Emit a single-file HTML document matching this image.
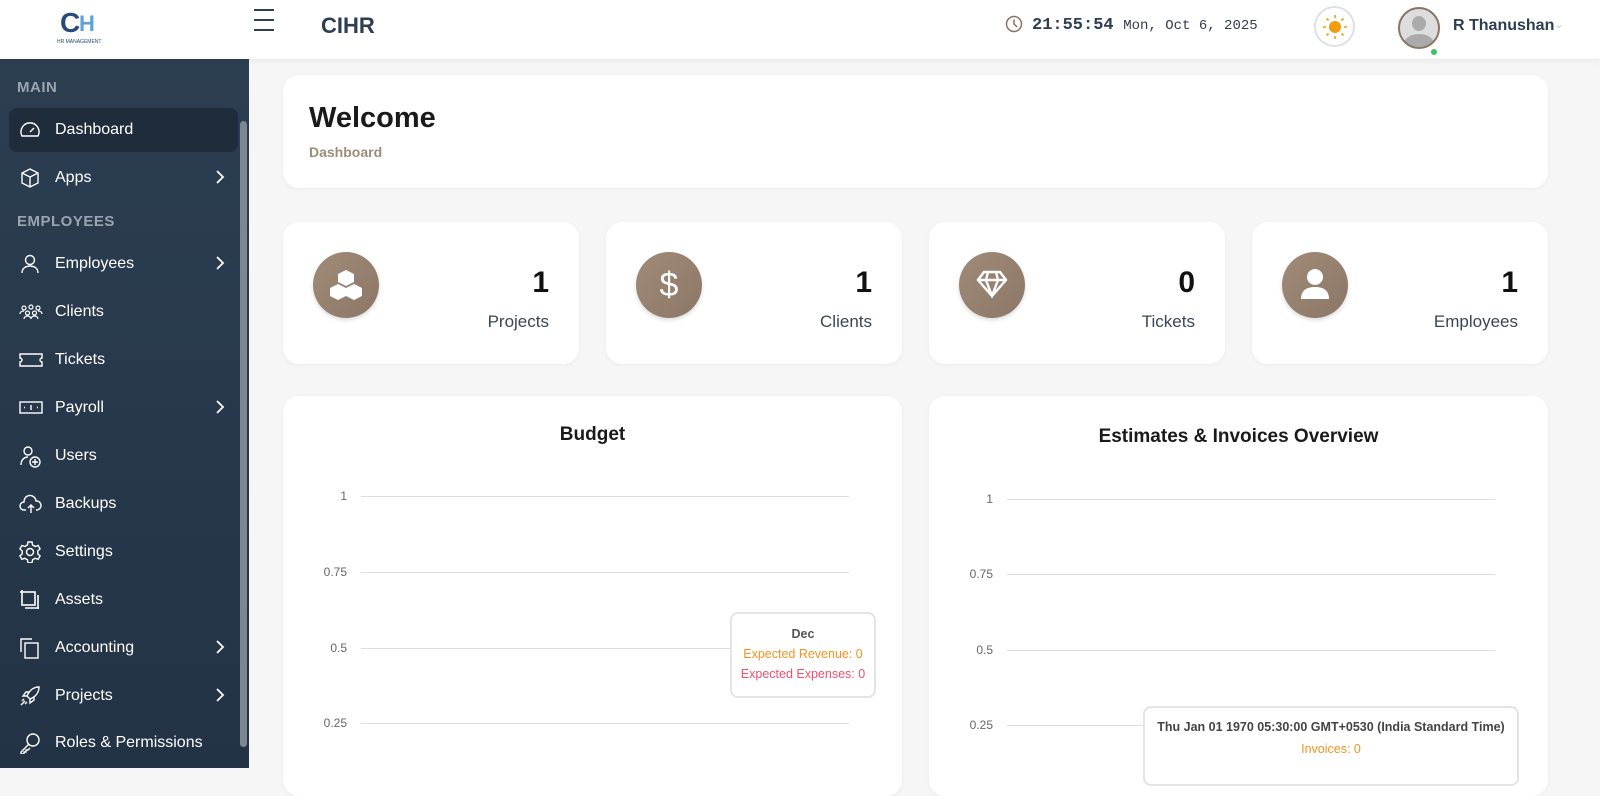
<!DOCTYPE html>
<html><head><meta charset="utf-8"><style>
*{box-sizing:border-box;margin:0;padding:0}
body{width:1600px;height:768px;overflow:hidden;background:#f6f6f6;font-family:"Liberation Sans",sans-serif;position:relative}
.hdr{position:absolute;left:0;top:0;width:1600px;height:59px;background:#fff;box-shadow:0 2px 6px rgba(0,0,0,.06);z-index:3}
.side{position:absolute;left:0;top:59px;width:249px;height:709px;background:linear-gradient(#2c3e51,#233346);color:#fff}
.scroll{position:absolute;left:240px;top:62px;width:7px;height:626px;background:#7d8792;border-radius:4px}
.lbl{position:absolute;left:17px;font-size:15px;font-weight:bold;color:#9aa5ae;letter-spacing:.5px}
.it{position:absolute;left:9px;width:229px;height:44px;font-size:16px;color:#fff;display:flex;align-items:center;padding-left:46px}
.it svg{position:absolute;left:10px;top:11px}
.it .ch{position:absolute;left:205px;top:14px}
.card{position:absolute;background:#fff;border-radius:16px;box-shadow:0 1px 4px rgba(0,0,0,.05)}
.stat .ic{position:absolute;left:30px;top:30px;width:66px;height:66px;border-radius:50%;background:linear-gradient(135deg,#a08b78,#8c7767);box-shadow:0 2px 4px rgba(0,0,0,.15)}
.stat .n{position:absolute;right:30px;top:44px;font-size:30px;font-weight:bold;color:#111}
.stat .t{position:absolute;right:30px;top:90px;font-size:17px;color:#3a4656}
.gl{position:absolute;height:1px;background:#ddd}
.ax{position:absolute;font-size:12px;color:#666;text-align:right;width:40px}
.tip{position:absolute;background:#fff;border:2px solid #e4e4e4;border-radius:8px;font-size:12.5px;text-align:center}
</style></head><body>
<div class="hdr">
 <div style="position:absolute;left:60px;top:10px;width:40px;height:26px">
  <div style="position:absolute;left:0;top:0;font-size:28px;font-weight:bold;color:#2c4a78;line-height:26px">C</div>
  <div style="position:absolute;left:19px;top:2px;font-size:22px;font-weight:bold;color:#5ba2d8;line-height:24px">H</div>
 </div>
 <div style="position:absolute;left:57px;top:39px;font-size:5px;color:#2c4a78">HR MANAGEMENT</div>
 <div style="position:absolute;left:254px;top:9px;width:20px;height:2px;background:#2c3e50"></div>
 <div style="position:absolute;left:254px;top:19px;width:20px;height:2px;background:#2c3e50"></div>
 <div style="position:absolute;left:254px;top:29px;width:20px;height:2px;background:#2c3e50"></div>
 <div style="position:absolute;left:321px;top:13px;font-size:22px;font-weight:bold;color:#2c3e50">CIHR</div>
 <svg style="position:absolute;left:1005px;top:15px" width="18" height="18" viewBox="0 0 18 18"><circle cx="9" cy="9" r="7.5" fill="none" stroke="#8a7565" stroke-width="1.5"/><path d="M9 4.5V9l3 3" fill="none" stroke="#8a7565" stroke-width="1.5"/></svg>
 <div style="position:absolute;left:1032px;top:16px;font-family:'Liberation Mono',monospace;color:#2c3e50"><b style="font-size:17px">21:55:54</b> <span style="font-size:14px">Mon, Oct 6, 2025</span></div>
 <div style="position:absolute;left:1314px;top:6px;width:41px;height:41px;border-radius:50%;border:2px solid #dde0e5;background:#fff"></div>
 <svg style="position:absolute;left:1322px;top:14px" width="26" height="26" viewBox="0 0 26 26"><circle cx="13" cy="13" r="6" fill="#f39c12"/><g stroke="#f39c12" stroke-width="1.6"><path d="M13 1v3M13 22v3M1 13h3M22 13h3M4.5 4.5l2 2M19.5 19.5l2 2M4.5 21.5l2-2M19.5 6.5l2-2"/></g></svg>
 <div style="position:absolute;left:1398px;top:7px;width:42px;height:42px;border-radius:50%;border:2px solid #8a7565;background:#ddd;overflow:hidden"><div style="position:absolute;left:12px;top:7px;width:14px;height:15px;border-radius:50%;background:#aaa"></div><div style="position:absolute;left:4px;top:25px;width:30px;height:20px;border-radius:50%;background:#aaa"></div></div>
 <div style="position:absolute;left:1430px;top:48px;width:8px;height:8px;border-radius:50%;background:#3cc25a;border:1px solid #fff"></div>
 <div style="position:absolute;left:1453px;top:17px;font-size:16px;font-weight:bold;color:#2c3e50">R Thanushan</div>
 <div style="position:absolute;left:1554px;top:17px;font-size:12px;color:#ccc">&#8964;</div>
</div>
<div class="side">
 <div class="lbl" style="top:20px">MAIN</div>
 <div class="it" style="top:49px;background:#1f2c3b;border-radius:8px"><svg width="22" height="22" viewBox="0 0 22 22" fill="none" stroke="#fff" stroke-width="1.4"><path d="M3 17a9 9 0 1 1 16 0z"/><path d="M11 13l4-4"/></svg>Dashboard</div>
 <div class="it" style="top:97px"><svg width="22" height="22" viewBox="0 0 22 22" fill="none" stroke="#fff" stroke-width="1.4"><path d="M11 2l8 4v10l-8 4-8-4V6zM3 6l8 4 8-4M11 10v10"/></svg>Apps<svg class="ch" width="12" height="14" viewBox="0 0 12 14" fill="none" stroke="#fff" stroke-width="1.8"><path d="M3 1l6 6-6 6"/></svg></div>
 <div class="lbl" style="top:154px">EMPLOYEES</div>
 <div class="it" style="top:183px"><svg width="22" height="22" viewBox="0 0 22 22" fill="none" stroke="#fff" stroke-width="1.4"><circle cx="11" cy="7" r="4.5"/><path d="M3 20c0-5 4-7 8-7s8 2 8 7"/></svg>Employees<svg class="ch" width="12" height="14" viewBox="0 0 12 14" fill="none" stroke="#fff" stroke-width="1.8"><path d="M3 1l6 6-6 6"/></svg></div>
 <div class="it" style="top:231px"><svg width="24" height="22" viewBox="0 0 24 22" fill="none" stroke="#fff" stroke-width="1.2"><circle cx="5" cy="7" r="2"/><circle cx="12" cy="6" r="2"/><circle cx="19" cy="7" r="2"/><circle cx="8.5" cy="12" r="2"/><circle cx="15.5" cy="12" r="2"/><path d="M1 13c0-2 2-3 4-3M23 13c0-2-2-3-4-3M5 18c0-2 2-3 3.5-3s3.5 1 3.5 3M12 18c0-2 2-3 3.5-3s3.5 1 3.5 3"/></svg>Clients</div>
 <div class="it" style="top:279px"><svg width="24" height="22" viewBox="0 0 24 22" fill="none" stroke="#fff" stroke-width="1.4"><path d="M1 5h22v4a2 2 0 0 0 0 4v4H1v-4a2 2 0 0 0 0-4z"/></svg>Tickets</div>
 <div class="it" style="top:327px"><svg width="24" height="22" viewBox="0 0 24 22" fill="none" stroke="#fff" stroke-width="1.4"><rect x="1" y="5" width="22" height="11"/><path d="M12 8v5M5 10.5h1M18 10.5h1"/></svg>Payroll<svg class="ch" width="12" height="14" viewBox="0 0 12 14" fill="none" stroke="#fff" stroke-width="1.8"><path d="M3 1l6 6-6 6"/></svg></div>
 <div class="it" style="top:375px"><svg width="24" height="24" viewBox="0 0 24 24" fill="none" stroke="#fff" stroke-width="1.4"><circle cx="9" cy="6" r="4"/><path d="M2 20c0-5 3-8 7-8"/><circle cx="16" cy="17" r="5"/><path d="M16 14v6M13 17h6"/></svg>Users</div>
 <div class="it" style="top:423px"><svg width="24" height="22" viewBox="0 0 24 22" fill="none" stroke="#fff" stroke-width="1.4"><path d="M7 17H5a4 4 0 0 1 0-8 6 6 0 0 1 12-1 4.5 4.5 0 0 1 1 9h-1"/><path d="M12 20v-8M9 15l3-3 3 3"/></svg>Backups</div>
 <div class="it" style="top:471px"><svg width="22" height="22" viewBox="0 0 22 22" fill="none" stroke="#fff" stroke-width="1.4"><circle cx="11" cy="11" r="3.5"/><path d="M9 1h4l.6 3 2.6 1.5 2.9-1 2 3.4-2.3 2v3l2.3 2-2 3.4-2.9-1-2.6 1.5-.6 3H9l-.6-3-2.6-1.5-2.9 1-2-3.4 2.3-2v-3l-2.3-2 2-3.4 2.9 1L8.4 4z"/></svg>Settings</div>
 <div class="it" style="top:519px"><svg width="22" height="22" viewBox="0 0 22 22" fill="none" stroke="#fff" stroke-width="1.6"><rect x="3" y="3" width="13" height="13"/><path d="M19 6v14M6 19h14M1 3h2M3 1v2"/></svg>Assets</div>
 <div class="it" style="top:567px"><svg width="22" height="22" viewBox="0 0 22 22" fill="none" stroke="#fff" stroke-width="1.4"><path d="M2 15V2h11"/><rect x="6" y="6" width="13" height="15"/></svg>Accounting<svg class="ch" width="12" height="14" viewBox="0 0 12 14" fill="none" stroke="#fff" stroke-width="1.8"><path d="M3 1l6 6-6 6"/></svg></div>
 <div class="it" style="top:615px"><svg width="22" height="22" viewBox="0 0 22 22" fill="none" stroke="#fff" stroke-width="1.4"><path d="M20 2c-6 0-10 4-12 9l3 3c5-2 9-6 9-12zM8 11H4l3-4h4M11 14v4l4-3v-4M6 16l-4 4M5 14l-2 2M8 17l-2 2"/></svg>Projects<svg class="ch" width="12" height="14" viewBox="0 0 12 14" fill="none" stroke="#fff" stroke-width="1.8"><path d="M3 1l6 6-6 6"/></svg></div>
 <div class="it" style="top:662px"><svg width="22" height="22" viewBox="0 0 22 22" fill="none" stroke="#fff" stroke-width="1.4"><circle cx="14" cy="8" r="6"/><path d="M10 12l-8 8v2h3v-2h2v-2h2l2-2"/></svg>Roles &amp; Permissions</div>
 <div class="scroll"></div>
</div>

<div class="card" style="left:283px;top:75px;width:1265px;height:113px">
 <div style="position:absolute;left:26px;top:27px;font-size:29px;font-weight:bold;color:#1a1a1a">Welcome</div>
 <div style="position:absolute;left:26px;top:69px;font-size:14px;font-weight:bold;color:#a08b78">Dashboard</div>
</div>

<div class="card stat" style="left:283px;top:222px;width:296px;height:142px"><div class="ic"><svg style="position:absolute;left:15px;top:15px" width="36" height="36" viewBox="0 0 36 36" fill="#fff"><path d="M18 3l8 4v8l-8 4-8-4V7zM10 17l8 4v8l-8 4-8-4v-8zM26 17l8 4v8l-8 4-8-4v-8z"/></svg></div><div class="n">1</div><div class="t">Projects</div></div>
<div class="card stat" style="left:606px;top:222px;width:296px;height:142px"><div class="ic"><div style="position:absolute;width:66px;text-align:center;top:14px;font-size:34px;color:#fff">$</div></div><div class="n">1</div><div class="t">Clients</div></div>
<div class="card stat" style="left:929px;top:222px;width:296px;height:142px"><div class="ic"><svg style="position:absolute;left:17px;top:18px" width="32" height="28" viewBox="0 0 32 28" fill="none" stroke="#fff" stroke-width="2.4"><path d="M8 2h16l6 8-14 16L2 10zM2 10h28M12 2l-2 8 6 16 6-16-2-8"/></svg></div><div class="n">0</div><div class="t">Tickets</div></div>
<div class="card stat" style="left:1252px;top:222px;width:296px;height:142px"><div class="ic"><svg style="position:absolute;left:17px;top:15px" width="32" height="34" viewBox="0 0 32 34" fill="#fff"><circle cx="16" cy="10" r="8"/><path d="M2 32c0-9 6-12 14-12s14 3 14 12z"/></svg></div><div class="n">1</div><div class="t">Employees</div></div>

<div class="card" style="left:283px;top:396px;width:619px;height:400px">
 <div style="position:absolute;width:619px;top:28px;text-align:center;font-size:19px;font-weight:bold;color:#1a1a1a">Budget</div>
 <div class="ax" style="left:24px;top:93px">1</div><div class="gl" style="left:78px;top:100px;width:488px"></div>
 <div class="ax" style="left:24px;top:169px">0.75</div><div class="gl" style="left:78px;top:176px;width:488px"></div>
 <div class="ax" style="left:24px;top:245px">0.5</div><div class="gl" style="left:78px;top:252px;width:488px"></div>
 <div class="ax" style="left:24px;top:320px">0.25</div><div class="gl" style="left:78px;top:327px;width:488px"></div>
 <div class="tip" style="left:447px;top:216px;width:146px;height:86px"><div style="margin-top:13px;font-weight:bold;color:#555">Dec</div><div style="margin-top:6px;color:#f7931e">Expected Revenue: 0</div><div style="margin-top:6px;color:#f0506e">Expected Expenses: 0</div></div>
</div>
<div class="card" style="left:929px;top:396px;width:619px;height:400px">
 <div style="position:absolute;width:619px;top:30px;text-align:center;font-size:19px;font-weight:bold;color:#1a1a1a">Estimates &amp; Invoices Overview</div>
 <div class="ax" style="left:24px;top:96px">1</div><div class="gl" style="left:78px;top:103px;width:488px"></div>
 <div class="ax" style="left:24px;top:171px">0.75</div><div class="gl" style="left:78px;top:178px;width:488px"></div>
 <div class="ax" style="left:24px;top:247px">0.5</div><div class="gl" style="left:78px;top:254px;width:488px"></div>
 <div class="ax" style="left:24px;top:322px">0.25</div><div class="gl" style="left:78px;top:329px;width:488px"></div>
 <div class="tip" style="left:214px;top:310px;width:376px;height:80px"><div style="margin-top:12px;font-weight:bold;color:#444">Thu Jan 01 1970 05:30:00 GMT+0530 (India Standard Time)</div><div style="margin-top:8px;color:#f7931e">Invoices: 0</div></div>
</div>
</body></html>
